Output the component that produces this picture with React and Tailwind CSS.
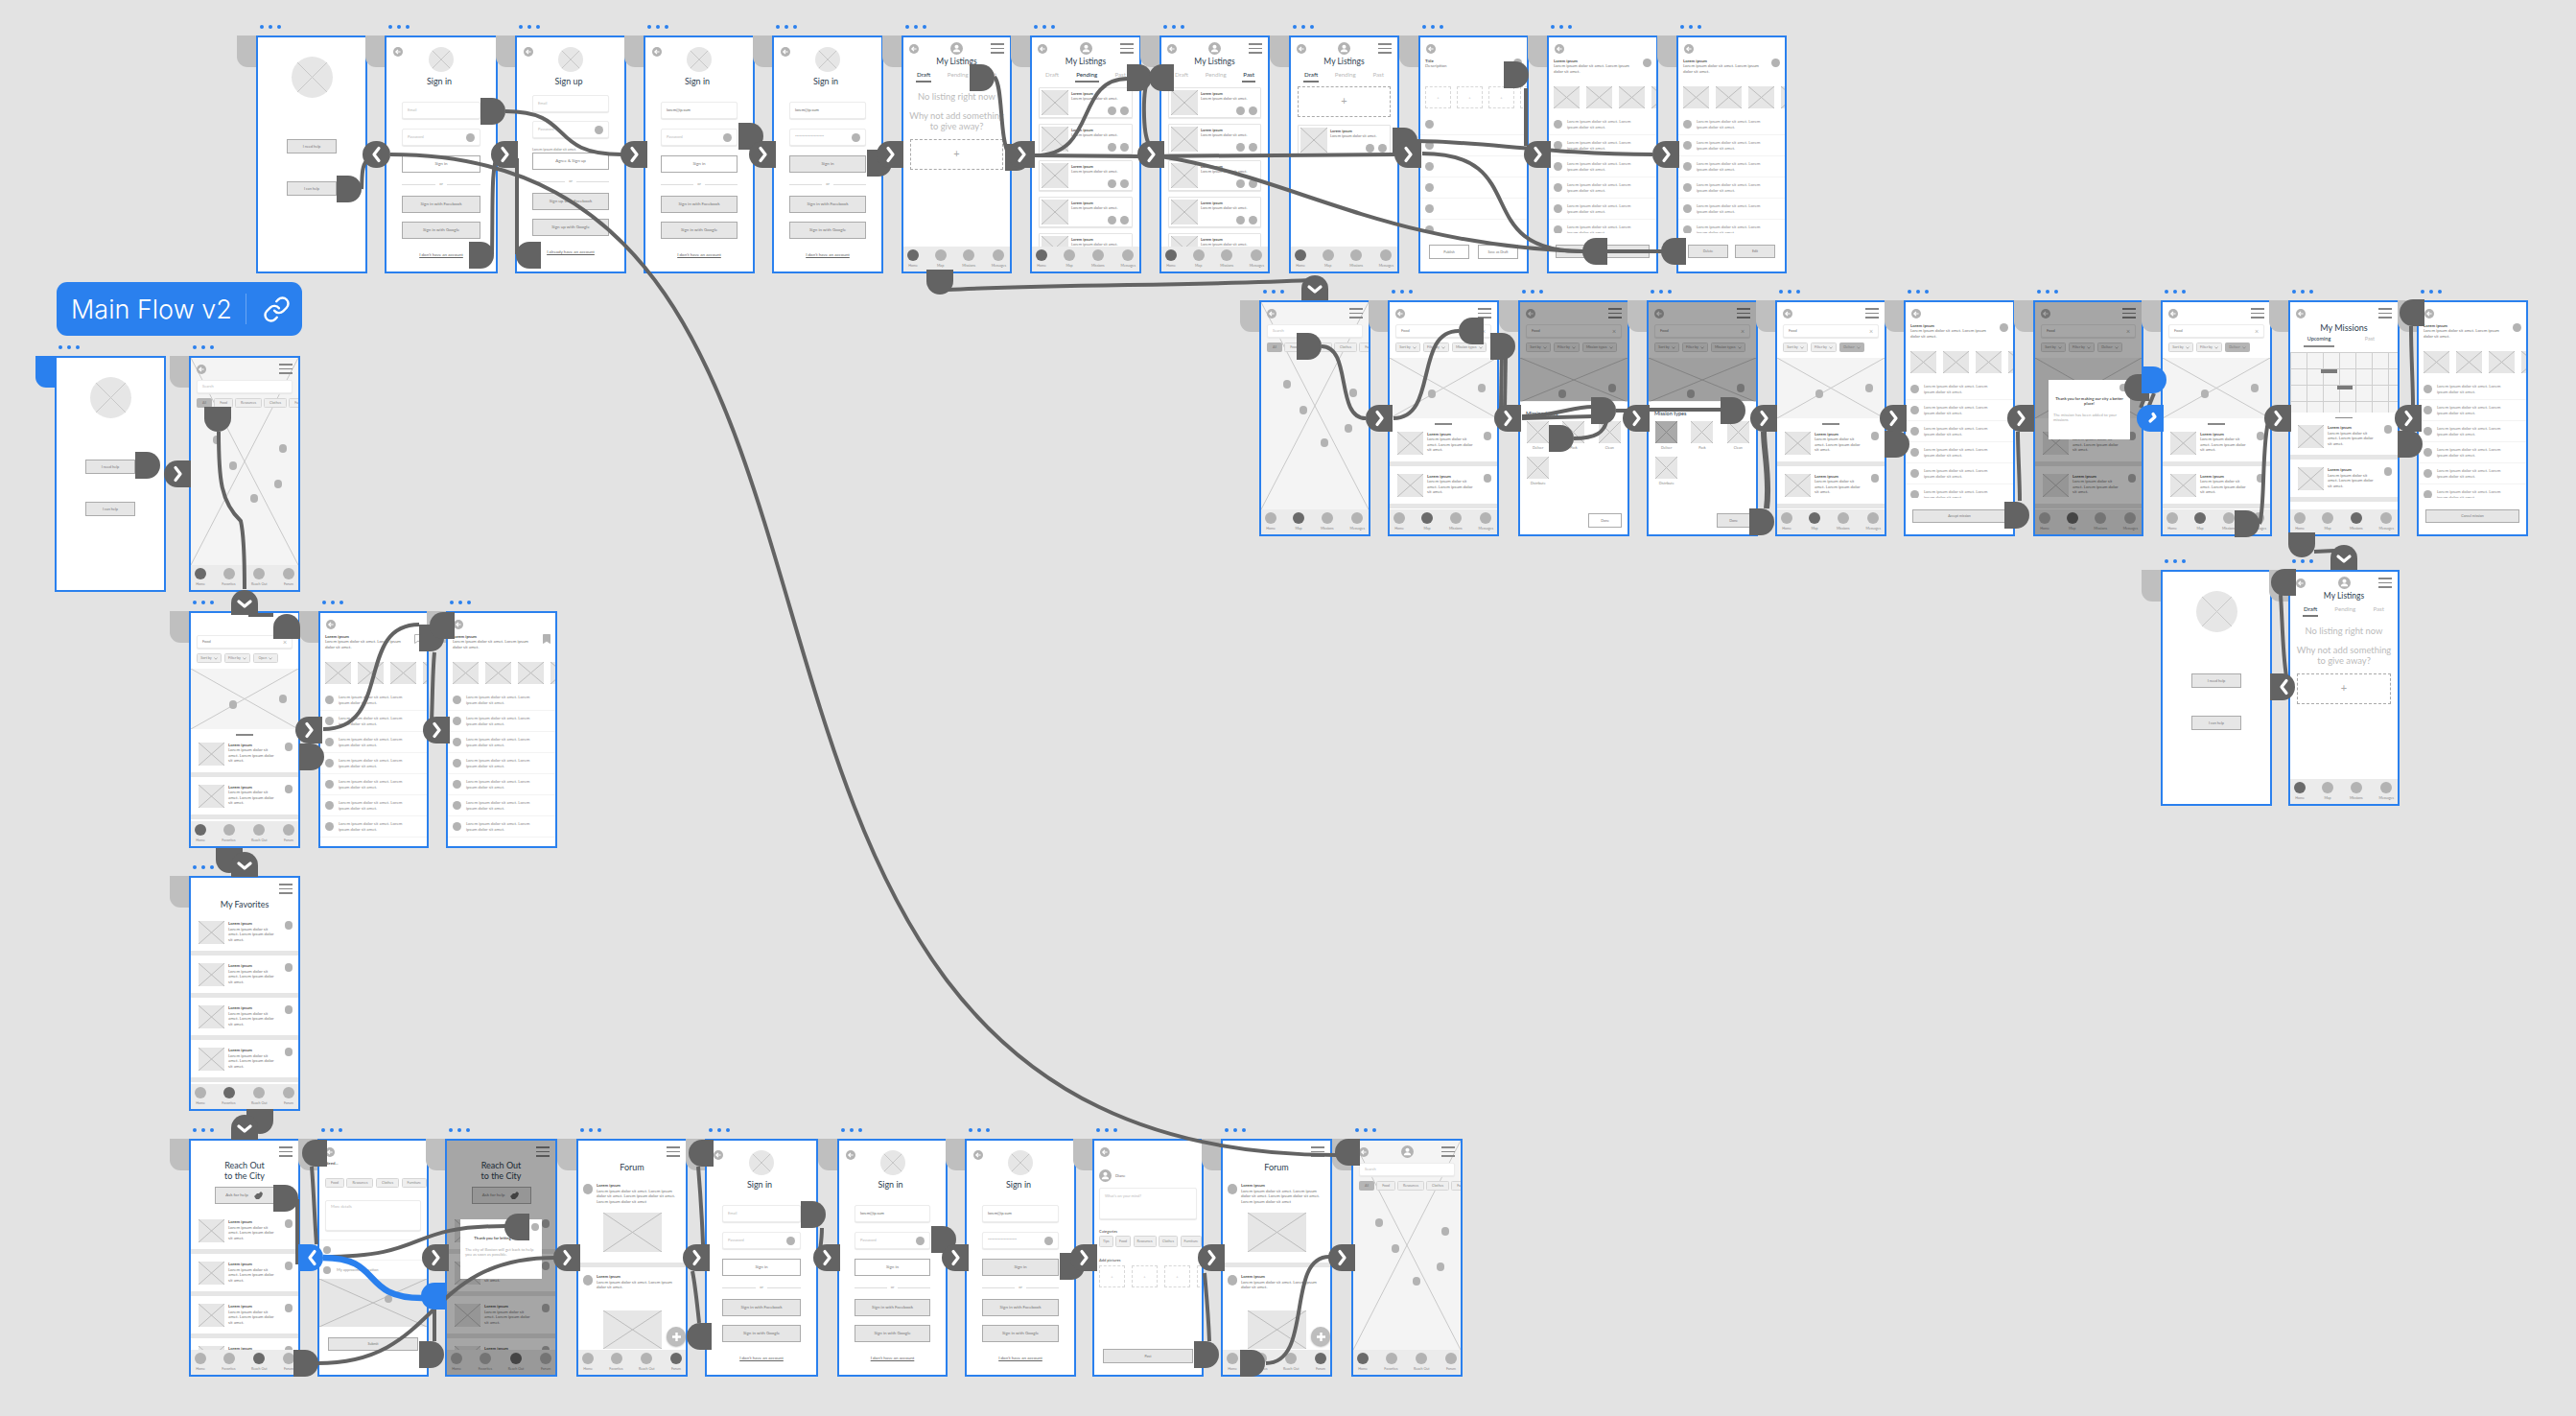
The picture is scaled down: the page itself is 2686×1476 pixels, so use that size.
import React from 'react';
import { Link } from 'lucide-react';

const LOREM2 = 'Lorem ipsum dolor sit amet. Lorem ipsum dolor sit amet.';
const NAV_A = ['Home', 'Map', 'Missions', 'Messages'];
const NAV_B = ['Home', 'Favorites', 'Reach Out', 'Forum'];

const X = ({ className = '', fill = 'bg-[#e6e6e6]', line = '#bcbcbc' }) => (
  <div className={`shrink-0 ${fill} ${className}`}>
    <svg className="block w-full h-full" viewBox="0 0 100 100" preserveAspectRatio="none">
      <path d="M0 0L100 100M100 0L0 100" stroke={line} strokeWidth="1" vectorEffect="non-scaling-stroke" fill="none" />
    </svg>
  </div>
);
const Dot = ({ className = 'w-[8px] h-[8px]', c = 'bg-[#b3b3b3]' }) => <div className={`shrink-0 rounded-full ${c} ${className}`} />;
const Back = () => (
  <svg className="w-[10px] h-[10px] shrink-0 block" viewBox="0 0 10 10">
    <circle cx="5" cy="5" r="5" fill="#b3b3b3" />
    <path d="M7.6 5H3M5 2.8 2.8 5 5 7.2" stroke="#fff" strokeWidth="1.2" fill="none" />
  </svg>
);
const Avatar = ({ className = 'w-[13px] h-[13px]' }) => (
  <svg className={`shrink-0 block ${className}`} viewBox="0 0 14 14">
    <circle cx="7" cy="7" r="7" fill="#b3b3b3" />
    <circle cx="7" cy="5.2" r="2.2" fill="#fff" />
    <path d="M3 11c0-2.4 1.8-3.3 4-3.3s4 .9 4 3.3z" fill="#fff" />
  </svg>
);
const Menu = () => (
  <div className="flex flex-col gap-[2.5px] w-[14px] justify-self-end">
    <div className="h-[1.7px] bg-[#888]" />
    <div className="h-[1.7px] bg-[#888]" />
    <div className="h-[1.7px] bg-[#888]" />
  </div>
);
const Top = ({ back = true, avatar, menu = true }) => (
  <div className="grid grid-cols-[1fr_auto_1fr] items-center h-[13px] mt-[5px] px-[6px] shrink-0">
    {back ? <Back /> : <span />}
    {avatar ? <Avatar /> : <span />}
    {menu ? <Menu /> : <span />}
  </div>
);
const Title = ({ children, className = '' }) => <div className={`text-center text-[#2d3e50] text-[9px] leading-[11px] ${className}`}>{children}</div>;
const Btn = ({ children, className = '', light }) => (
  <div className={`flex items-center justify-center border border-[#ababab] text-[#777] text-[4.5px] ${light ? 'bg-white' : 'bg-[#e6e6e6]'} ${className}`}>{children}</div>
);
const Field = ({ children, dot, x, className = 'h-[18px]' }) => (
  <div className={`flex items-center justify-between bg-white border border-[#ececec] rounded-[2px] shadow-[0_1px_1px_#e8e8e8] px-[5px] text-[4px] text-[#bbb] ${className}`}>
    <span>{children}</span>
    {dot && <Dot className="w-[9px] h-[9px]" />}
    {x && <span className="text-[#666] text-[7px] font-light leading-none">×</span>}
  </div>
);
const Nav = ({ labels = NAV_A, active = 0 }) => (
  <div className="mt-auto shrink-0 h-[26px] bg-[#ebebeb] flex justify-between px-[4px] pt-[3px]">
    {labels.map((l, i) => (
      <div key={l} className="flex flex-col items-center">
        <Dot className="w-[12px] h-[12px]" c={i === active ? 'bg-[#6a6a6a]' : 'bg-[#b3b3b3]'} />
        <span className="text-[3.6px] text-[#8a8a8a] mt-[2px] leading-[5px]">{l}</span>
      </div>
    ))}
  </div>
);
const Chev = () => (
  <svg className="w-[4px] h-[3px] ml-[2px]" viewBox="0 0 8 6"><path d="M1 1l3 3.5L7 1" stroke="#777" strokeWidth="1" fill="none" /></svg>
);
const Chip = ({ children, sel, caret, className = '' }) => (
  <div className={`flex items-center justify-center shrink-0 px-[5px] h-[10px] rounded-[1.5px] border text-[3.6px] ${sel ? 'bg-[#b5b5b5] border-[#b5b5b5] text-[#777]' : 'bg-[#efefef] border-[#d6d6d6] text-[#888]'} ${className}`}>
    {children}{caret && <Chev />}
  </div>
);
const Dashed = ({ className = '' }) => (
  <div className={`flex items-center justify-center shrink-0 border border-dashed border-[#d8d8d8] text-[#bbb] text-[4px] ${className}`}>+</div>
);
const Dim = ({ className = 'inset-0' }) => <div className={`absolute bg-black/35 ${className}`} />;

/* ---------- screens ---------- */
const Help = () => (
  <div className="flex flex-col items-center h-full">
    <X className="w-[43px] h-[43px] rounded-full overflow-hidden mt-[20px]" line="#c8c8c8" />
    <Btn className="w-[52px] h-[15px] mt-[43px] !text-[3.8px]">I need help</Btn>
    <Btn className="w-[52px] h-[15px] mt-[29px] !text-[3.8px]">I can help</Btn>
  </div>
);
const OrLine = () => (
  <div className="flex items-center gap-[4px] mt-[9px] h-[6px] text-[4px] text-[#999]">
    <div className="flex-1 h-[1px] bg-[#ddd]" /><span>or</span><div className="flex-1 h-[1px] bg-[#ddd]" />
  </div>
);
const Logo = () => (
  <div className="grid grid-cols-[1fr_26px_1fr] mt-[10px] px-[7px] h-[26px]">
    <Back />
    <X className="w-[26px] h-[26px] rounded-full overflow-hidden" line="#c8c8c8" />
  </div>
);
const SignIn = ({ email, pass, filled }) => (
  <div className="flex flex-col">
    <Logo />
    <Title className="mt-[4px] pr-[4px]">Sign in</Title>
    <div className="px-[16px] flex flex-col">
      <Field className="h-[18px] mt-[16px]">{email ? <span className="text-[#666]">lorem@ip.sum</span> : 'Email'}</Field>
      <Field dot className="h-[18px] mt-[10px]">{pass ? <span className="text-[#666] tracking-[-0.2px]">********************</span> : 'Password'}</Field>
      <Btn light={!filled} className="h-[18px] mt-[10px]">Sign in</Btn>
      <OrLine />
      <Btn className="h-[18px] mt-[9px]">Sign in with Facebook</Btn>
      <Btn className="h-[18px] mt-[9px]">Sign in with Google</Btn>
      <div className="mt-[14px] text-center underline text-[#666] text-[4.5px] leading-[6px]">I don't have an account</div>
    </div>
  </div>
);
const SignUp = () => (
  <div className="flex flex-col">
    <Logo />
    <Title className="mt-[4px] pr-[4px]">Sign up</Title>
    <div className="px-[16px] flex flex-col">
      <Field className="h-[18px] mt-[9px]">Email</Field>
      <Field dot className="h-[18px] mt-[9px]">Password</Field>
      <div className="text-[3.8px] text-[#888] mt-[9px] leading-[5px]">Lorem ipsum dolor sit amet.</div>
      <Btn light className="h-[18px] mt-[1px]">Agree &amp; Sign up</Btn>
      <OrLine />
      <Btn className="h-[18px] mt-[9px]">Sign up with Facebook</Btn>
      <Btn className="h-[18px] mt-[9px]">Sign up with Google</Btn>
      <div className="mt-[14px] text-center underline text-[#666] text-[4.5px] leading-[6px]">I already have an account</div>
    </div>
  </div>
);
const ListTabs = ({ tab }) => (
  <div className="flex justify-between px-[14px] mt-[4px]">
    {['Draft', 'Pending', 'Past'].map((t) => (
      <div key={t} className="flex flex-col items-center">
        <span className={`text-[6.2px] leading-[7px] ${t === tab ? 'text-[#2d3e50] font-medium' : 'text-[#bbb]'}`}>{t}</span>
        <div className={`h-[1.5px] w-[115%] mt-[3px] ${t === tab ? 'bg-[#777]' : 'bg-transparent'}`} />
      </div>
    ))}
  </div>
);
const LCard = () => (
  <div className="flex gap-[2px] h-[32px] shrink-0 mx-[7px] mb-[6px] p-[2px] bg-white border border-[#e4e4e4] rounded-[1px] shadow-[0_1px_1px_#e6e6e6]">
    <X className="w-[28px] h-[26px]" />
    <div className="flex-1 flex flex-col pt-[1px] ml-[1px]">
      <div className="text-[4px] leading-[5px] font-bold text-[#555]">Lorem ipsum</div>
      <div className="text-[4px] leading-[5px] text-[#777] whitespace-nowrap">Lorem ipsum dolor sit amet.</div>
      <div className="flex justify-end gap-[4px] mt-auto pr-[1px]"><Dot className="w-[9px] h-[9px]" /><Dot className="w-[9px] h-[9px]" /></div>
    </div>
  </div>
);
const Listings = ({ tab, children }) => (
  <div className="flex flex-col h-full">
    <Top avatar />
    <Title className="mt-[2px] !text-[8.5px]">My Listings</Title>
    <ListTabs tab={tab} />
    {children}
  </div>
);
const ListDraft = () => (
  <Listings tab="Draft">
    <div className="text-center text-[#bbb] text-[9.4px] leading-[11px] mt-[9px] whitespace-nowrap">No listing right now</div>
    <div className="text-center text-[#bbb] text-[9.4px] leading-[11px] mt-[9px] whitespace-nowrap">Why not add something<br />to give away?</div>
    <div className="mx-[7px] mt-[8px] h-[32px] border border-dashed border-[#aaa] flex items-center justify-center text-[#aaa] text-[11px]">+</div>
    <Nav />
  </Listings>
);
const ListCards = ({ tab }) => (
  <Listings tab={tab}>
    <div className="flex-1 flex flex-col overflow-hidden mt-[5px]">
      {[0, 1, 2, 3, 4].map((i) => <LCard key={i} />)}
    </div>
    <Nav />
  </Listings>
);
const ListDraft2 = () => (
  <Listings tab="Draft">
    <div className="mx-[7px] mt-[4px] h-[32px] shrink-0 border border-dashed border-[#aaa] flex items-center justify-center text-[#aaa] text-[11px]">+</div>
    <div className="mt-[8px]"><LCard /></div>
    <Nav />
  </Listings>
);
const Head = ({ title = 'Lorem ipsum', desc = 'Lorem ipsum dolor sit amet. Lorem ipsum dolor sit amet.', right }) => (
  <div className="flex justify-between h-[29px] mt-[4px] px-[5px] shrink-0">
    <div className="w-[80px]">
      <div className="text-[4.4px] leading-[5px] font-bold text-[#555]">{title}</div>
      <div className="text-[4.4px] leading-[6px] text-[#777]">{desc}</div>
    </div>
    {right || <Dot className="w-[9px] h-[9px]" />}
  </div>
);
const Row = ({ text = true }) => (
  <div className="flex items-center gap-[5px] h-[22px] px-[5px] border-b border-[#f3f3f3] shrink-0">
    <Dot className="w-[9px] h-[9px]" />
    {text && <div className="w-[78px] text-[4.4px] leading-[5.5px] text-[#888]">{LOREM2}</div>}
  </div>
);
const Rows = ({ text, className = 'h-[124px]' }) => (
  <div className={`flex flex-col overflow-hidden mt-[6px] ${className}`}>
    {[0, 1, 2, 3, 4, 5, 6].map((i) => <Row key={i} text={text} />)}
  </div>
);
const Images = () => (
  <div className="flex gap-[7px] pl-[5px] h-[23px] overflow-hidden shrink-0">
    {[0, 1, 2, 3].map((i) => <X key={i} className="w-[27px] h-[23px]" />)}
  </div>
);
const Create = () => (
  <div className="flex flex-col h-full">
    <Top menu={false} />
    <Head title="Title" desc="Description" />
    <div className="flex gap-[6px] pl-[5px] h-[23px] overflow-hidden shrink-0">
      {[0, 1, 2, 3].map((i) => <Dashed key={i} className="w-[27px] h-[23px]" />)}
    </div>
    <Rows text={false} />
    <div className="flex justify-between px-[9px] mt-[12px]">
      <Btn light className="w-[42px] h-[15px] !text-[3.6px]">Publish</Btn>
      <Btn light className="w-[42px] h-[15px] !text-[3.6px]">Save as Draft</Btn>
    </div>
  </div>
);
const Detail = ({ footer, right, bare }) => (
  <div className="flex flex-col h-full">
    <Top menu={false} />
    <Head right={right} />
    <Images />
    <Rows className={bare ? 'h-[160px]' : 'h-[124px]'} />
    {footer && <div className="mt-[12px] px-[7px]">{footer}</div>}
  </div>
);
const Bookmark = ({ filled }) => (
  <svg className="w-[8px] h-[10px] shrink-0" viewBox="0 0 8 10"><path d="M.5.5h7v9L4 7 .5 9.5z" fill={filled ? '#b3b3b3' : 'none'} stroke="#b3b3b3" strokeWidth="1" /></svg>
);
const Pins = ({ list }) => list.map((p, i) => <div key={i} className={`absolute w-[8px] h-[9px] rounded-full bg-[#b3b3b3] ${p}`} />);
const MapHome = ({ nav, active = 0, avatar }) => (
  <div className="relative flex flex-col h-full">
    <X className="absolute inset-x-0 top-0 bottom-[26px]" fill="bg-[#f4f4f4]" line="#c8c8c8" />
    <div className="relative flex flex-col h-full">
      <Top avatar={avatar} />
      <Field className="h-[14px] mx-[6px] mt-[5px]">Search</Field>
      <div className="flex gap-[2px] pl-[6px] mt-[5px] overflow-hidden">
        <Chip sel>All</Chip><Chip>Food</Chip><Chip>Resources</Chip><Chip>Clothes</Chip><Chip>Furniture</Chip>
      </div>
      <Pins list={['left-[23px] top-[81px]', 'left-[92px] top-[90px]', 'left-[40px] top-[108px]', 'left-[87px] top-[127px]', 'left-[62px] top-[142px]']} />
      <Nav labels={nav} active={active} />
    </div>
  </div>
);
const Search = ({ chips, sel, back = true }) => (
  <>
    <Top back={back} menu={back} />
    <Field x className="h-[14px] mx-[6px] mt-[5px] shrink-0"><span className="text-[#777]">Food</span></Field>
    <div className="flex gap-[3px] pl-[6px] mt-[5px] shrink-0">
      {chips.map((c) => <Chip key={c} caret sel={c === sel} className="min-w-[26px] !px-[3px]">{c}</Chip>)}
    </div>
  </>
);
const MapBox = ({ className = 'h-[63px]' }) => (
  <div className={`relative mt-[6px] shrink-0 ${className}`}>
    <X className="h-full w-full" fill="bg-[#f4f4f4]" line="#c8c8c8" />
    <div className="absolute left-[40px] top-[33px] w-[8px] h-[9px] rounded-full bg-[#b3b3b3]" />
    <div className="absolute left-[92px] top-[27px] w-[8px] h-[9px] rounded-full bg-[#b3b3b3]" />
  </div>
);
const Item = ({ sep = true }) => (
  <div className="shrink-0">
    <div className="flex gap-[3px] h-[38px] pt-[7px] pr-[6px] pl-[8px]">
      <X className="w-[27px] h-[24px]" />
      <div className="w-[49px] ml-[1px]">
        <div className="text-[4.4px] leading-[5.5px] font-bold text-[#555]">Lorem ipsum</div>
        <div className="text-[4.4px] leading-[5.5px] text-[#777]">Lorem ipsum dolor sit amet. Lorem ipsum dolor sit amet.</div>
      </div>
      <Dot className="w-[8px] h-[9px] ml-auto" />
    </div>
    {sep && <div className="h-[5px] bg-[#e6e6e6] mb-[1px]" />}
  </div>
);
const MapList = ({ chips = ['Sort by', 'Filter by', 'Mission types'], sel, nav, active = 1, back = true, children }) => (
  <div className="relative flex flex-col h-full">
    <Search chips={chips} sel={sel} back={back} />
    <MapBox />
    <div className="w-[18px] h-[1.5px] bg-[#888] mx-auto mt-[5px] shrink-0" />
    <div className="flex-1 overflow-hidden">
      <Item /><Item /><Item />
    </div>
    <Nav labels={nav} active={active} />
    {children}
  </div>
);
const Mission = ({ selected, darkDone }) => (
  <div className="relative flex flex-col h-full">
    <Search chips={['Sort by', 'Filter by', 'Mission types']} />
    <MapBox className="h-[46px]" />
    <Dim className="inset-x-0 top-0 h-[103px]" />
    <div className="text-[5.5px] leading-[7px] font-medium text-[#2d3e50] pl-[6px] mt-[9px]">Mission types</div>
    <div className="grid grid-cols-3 gap-x-[14px] px-[7px] mt-[4px] text-center text-[3.6px] text-[#888]">
      {['Deliver', 'Pack', 'Clean', 'Distribute'].map((t, i) => (
        <div key={t} className="flex flex-col items-center h-[37px]">
          <X className="w-[23px] h-[23px]" fill={selected && i === 0 ? 'bg-[#aaa]' : 'bg-[#e6e6e6]'} line={selected && i === 0 ? '#888' : '#bcbcbc'} />
          <span className="mt-[2px]">{t}</span>
        </div>
      ))}
    </div>
    <div className="flex-1" />
    <Btn light={!darkDone} className="w-[35px] h-[15px] self-end mr-[6px] mb-[7px] !text-[3.6px]">Done</Btn>
  </div>
);
const Modal = ({ title, body, className = '' }) => (
  <div className={`absolute w-[85px] h-[62px] bg-white px-[5px] pt-[17px] ${className}`}>
    <Dot className="absolute right-[3px] top-[4px] w-[8px] h-[8px]" />
    <div className="text-[4.2px] leading-[5px] font-bold text-[#555] text-center">{title}</div>
    <div className="text-[4.2px] leading-[5px] text-[#aaa] mt-[7px]">{body}</div>
  </div>
);
const Missions = () => (
  <div className="flex flex-col h-full">
    <Top />
    <Title className="mt-[3px]">My Missions</Title>
    <div className="flex justify-between px-[14px] mt-[3px]">
      <div className="flex flex-col items-center"><span className="text-[5.5px] leading-[7px] text-[#2d3e50] font-medium">Upcoming</span><div className="h-[1.5px] w-[32px] bg-[#888] mt-[3px]" /></div>
      <span className="text-[5.5px] leading-[7px] text-[#bbb] mr-[10px]">Past</span>
    </div>
    <div className="relative h-[63px] mt-[5px] bg-[#f4f4f4] shrink-0 overflow-hidden bg-[linear-gradient(#cfcfcf_1px,transparent_1px),linear-gradient(90deg,#cfcfcf_1px,transparent_1px)] bg-[length:17px_17px]">
      <div className="absolute left-[32px] top-[18px] w-[17px] h-[4px] bg-[#7a7a7a]" />
      <div className="absolute left-[49px] top-[35px] w-[16px] h-[4px] bg-[#7a7a7a]" />
    </div>
    <div className="w-[18px] h-[1.5px] bg-[#888] mx-auto mt-[5px] shrink-0" />
    <div className="flex-1 overflow-hidden"><Item /><Item /></div>
    <Nav active={2} />
  </div>
);
const Favorites = () => (
  <div className="flex flex-col h-full">
    <Top back={false} />
    <Title className="mt-[4px]">My Favorites</Title>
    <div className="flex-1 overflow-hidden mt-[5px]"><Item /><Item /><Item /><Item /><Item /></div>
    <Nav labels={NAV_B} active={1} />
  </div>
);
const ReachOut = ({ children }) => (
  <div className="relative flex flex-col h-full">
    <Top back={false} />
    <Title className="mt-[2px]">Reach Out<br />to the City</Title>
    <div className="self-center flex items-center justify-center gap-[5px] w-[62px] h-[18px] mt-[6px] border border-[#ababab] bg-[#e6e6e6] text-[#777] text-[4.5px] shrink-0">
      Ask for help
      <svg className="w-[11px] h-[9px]" viewBox="0 0 11 9"><path d="M1 5l3-3 2 0 2-2 2 2-1 3-3 3-3 0z" fill="#666" /></svg>
    </div>
    <div className="flex-1 overflow-hidden mt-[9px]"><Item /><Item /><Item /><Item /></div>
    <Nav labels={NAV_B} active={2} />
    {children}
  </div>
);
const Ask = () => (
  <div className="flex flex-col h-full">
    <Top menu={false} />
    <div className="text-[4.4px] font-bold text-[#666] pl-[6px] mt-[3px] leading-[6px]">Need...</div>
    <div className="flex gap-[2.5px] pl-[6px] mt-[12px] overflow-hidden">
      <Chip>Food</Chip><Chip>Resources</Chip><Chip>Clothes</Chip><Chip>Furniture</Chip><Chip>Tips</Chip>
    </div>
    <Field className="!items-start !pt-[3px] h-[32px] mx-[6px] mt-[13px] shrink-0">More details</Field>
    <div className="h-[22px] mt-[9px] px-[4px] flex items-center border-y border-[#f3f3f3]"><Dot className="w-[8px] h-[8px]" /></div>
    <div className="h-[19px] px-[4px] flex items-center gap-[6px] text-[4px] text-[#999]"><Dot className="w-[8px] h-[8px]" />My approximate location</div>
    <div className="relative h-[50px]">
      <X className="w-full h-full" />
      <div className="absolute left-[68px] top-[17px] w-[8px] h-[8px] rounded-full bg-[#b3b3b3]" />
    </div>
    <Btn className="h-[14px] mx-[9px] mt-[11px] !text-[3.6px]">Submit</Btn>
  </div>
);
const Post = ({ short }) => (
  <div className="flex flex-col shrink-0">
    <div className="flex gap-[4px] pl-[5px] pr-[5px]">
      <Dot className="w-[10px] h-[11px] mt-[1px]" />
      <div className="text-[4.4px] leading-[5.5px] text-[#777]">
        <div className="font-bold text-[#555]">Lorem ipsum</div>
        {short ? LOREM2 : `${LOREM2} ${LOREM2} ${LOREM2}`.slice(0, 110)}
      </div>
    </div>
  </div>
);
const Forum = () => (
  <div className="relative flex flex-col h-full">
    <Top back={false} />
    <Title className="mt-[4px]">Forum</Title>
    <div className="flex-1 overflow-hidden mt-[11px]">
      <Post />
      <div className="flex justify-center mt-[9px]"><X className="w-[61px] h-[41px]" /></div>
      <div className="h-[5px] bg-[#e6e6e6] mt-[11px] mb-[7px]" />
      <Post short />
      <div className="flex justify-center mt-[21px]"><X className="w-[61px] h-[40px]" /></div>
    </div>
    <Nav labels={NAV_B} active={3} />
    <div className="absolute left-[92px] top-[194px] w-[20px] h-[20px] rounded-full bg-[#bdbdbd] shadow-[0_1px_2px_#aaa] flex items-center justify-center">
      <svg className="w-[11px] h-[11px]" viewBox="0 0 11 11"><path d="M5.5 1v9M1 5.5h9" stroke="#fff" strokeWidth="2.4" /></svg>
    </div>
  </div>
);
const PostForm = () => (
  <div className="flex flex-col h-full">
    <Top menu={false} />
    <div className="flex items-center gap-[4px] pl-[5px] mt-[12px]"><Avatar /><span className="text-[4px] text-[#777] font-medium">Diane</span></div>
    <Field className="!items-start !pt-[5px] h-[33px] mx-[5px] mt-[6px] shrink-0">What's on your mind?</Field>
    <div className="text-[4px] font-bold text-[#777] pl-[5px] mt-[10px] leading-[5px]">Categories</div>
    <div className="flex gap-[2.5px] pl-[5px] mt-[2px] overflow-hidden">
      <Chip className="!h-[12px] !px-[3px]">Tips</Chip><Chip className="!h-[12px] !px-[3px]">Food</Chip><Chip className="!h-[12px] !px-[3px]">Resources</Chip><Chip className="!h-[12px] !px-[3px]">Clothes</Chip><Chip className="!h-[12px] !px-[3px]">Furniture</Chip>
    </div>
    <div className="text-[4px] font-bold text-[#777] pl-[5px] mt-[11px] leading-[5px]">Add pictures</div>
    <div className="flex gap-[7px] pl-[5px] mt-[3px] overflow-hidden">
      {[0, 1, 2, 3].map((i) => <Dashed key={i} className="w-[27px] h-[23px]" />)}
    </div>
    <Btn className="h-[15px] mx-[9px] mt-auto mb-[12px] !text-[3.6px]">Post</Btn>
  </div>
);

/* ---------- canvas data ---------- */
const FRAMES = [
  [267, 37, 116, 248, <Help />], [401, 37, 118, 248, <SignIn />], [537, 37, 116, 248, <SignUp />], [671, 37, 116, 248, <SignIn email />], [805, 37, 116, 248, <SignIn email pass filled />],
  [940, 37, 115, 248, <ListDraft />], [1074, 37, 116, 248, <ListCards tab="Pending" />], [1209, 37, 115, 248, <ListCards tab="Past" />], [1344, 37, 115, 248, <ListDraft2 />],
  [1479, 37, 115, 248, <Create />],
  [1613, 37, 116, 248, <Detail footer={<Btn className="h-[14px] !text-[3.6px]">Accept mission</Btn>} />],
  [1748, 37, 115, 248, <Detail footer={<div className="flex justify-between px-[3px]"><Btn className="w-[42px] h-[14px] !text-[3.6px]">Delete</Btn><Btn className="w-[42px] h-[14px] !text-[3.6px]">Edit</Btn></div>} />],

  [1313, 313, 116, 246, <MapHome active={1} />],
  [1447, 313, 116, 246, <MapList />],
  [1583, 313, 116, 246, <Mission />],
  [1717, 313, 116, 246, <Mission selected darkDone />],
  [1851, 313, 116, 246, <MapList sel="Deliver" chips={['Sort by', 'Filter by', 'Deliver']} />],
  [1985, 313, 116, 246, <Detail footer={<Btn className="h-[14px] !text-[3.6px]">Accept mission</Btn>} />],
  [2120, 313, 115, 246, <MapList sel="none" chips={['Sort by', 'Filter by', 'Deliver']}><Dim /><Modal className="left-[14px] top-[81px]" title="Thank you for making our city a better place!" body="The mission has been added to your missions" /></MapList>],
  [2253, 313, 116, 246, <MapList sel="Deliver" chips={['Sort by', 'Filter by', 'Deliver']} />],
  [2386, 313, 116, 246, <Missions />],
  [2520, 313, 116, 246, <Detail footer={<Btn className="h-[14px] !text-[3.6px]">Cancel mission</Btn>} />],
  [2253, 594, 116, 246, <Help />],
  [2386, 594, 116, 246, <ListDraft />],

  [57, 371, 116, 246, <Help />, true],
  [197, 371, 116, 246, <MapHome nav={NAV_B} />],
  [197, 637, 116, 247, <MapList back={false} chips={['Sort by', 'Filter by', 'Open']} nav={NAV_B} active={0} />],
  [332, 637, 115, 247, <Detail bare right={<Bookmark />} />],
  [465, 637, 116, 247, <Detail bare right={<Bookmark filled />} />],
  [197, 913, 116, 245, <Favorites />],

  [197, 1187, 116, 248, <ReachOut />],
  [331, 1187, 116, 248, <Ask />],
  [464, 1187, 117, 248, <ReachOut><Dim /><Modal className="left-[14px] top-[82px]" title="Thank you for letting us know!" body="The city of Boston will get back to help you as soon as possible." /></ReachOut>],
  [601, 1187, 116, 248, <Forum />],
  [735, 1187, 118, 248, <SignIn />],
  [873, 1187, 115, 248, <SignIn email />],
  [1006, 1187, 116, 248, <SignIn email pass filled />],
  [1139, 1187, 116, 248, <PostForm />],
  [1273, 1187, 116, 248, <Forum />],
  [1409, 1187, 116, 248, <MapHome nav={NAV_B} avatar />],
];

const LINES = [
  'M377 197C378 182 376 172 386 163',
  'M407 161C1000 161 635 1204 1393 1204',
  'M527 116C600 116 570 161 648 161',
  'M513 265C514 210 512 175 519 161',
  'M539 265L539 165',
  'M1037 80C1046 90 1042 145 1052 161',
  'M1079 162L1186 163L1455 161',
  'M1176 82C1120 82 1145 162 1079 162',
  'M1199 81C1190 90 1192 140 1198 150',
  'M1210 163C1350 185 1440 255 1650 262',
  'M1483 160C1600 160 1530 262 1650 262',
  'M1650 262L1733 262',
  'M1477 147C1540 147 1620 161 1723 161',
  'M1591 92L1591 152',
  'M987 302C1100 296 1250 298 1366 292',
  'M1378 361C1410 361 1392 436 1424 436',
  'M1453 436C1500 436 1474 345 1521 345',
  'M1570 370L1569 425',
  'M1566 370L1565 425',
  'M1587 434C1620 434 1640 424 1660 424',
  'M1587 436L1660 434',
  'M1641 457C1665 457 1672 450 1675 440',
  'M1685 428L1700 428',
  'M1794 427L1720 427',
  'M1841 530C1845 500 1838 470 1838 450',
  'M1843 530C1847 500 1840 470 1840 450',
  'M2106 522C2106 500 2104 470 2104 450',
  'M2246 410L2240 425',
  'M2238 410L2232 425',
  'M2356 546C2362 530 2358 460 2366 436',
  'M2514 340C2514 370 2516 400 2516 422',
  'M2413 575L2434 574',
  'M2378 620C2380 650 2380 680 2384 705',
  'M228 450C228 499 230 523 251 543C255 560 255 590 255 614',
  'M259 641L285 641',
  'M337 760C410 760 370 651 437 651',
  'M453 680C451 700 451 730 450 752',
  'M310 1250L310 1318',
  'M325 1216C327 1240 328 1270 330 1297',
  'M337 1310C450 1310 420 1278 527 1278',
  'M331 1421C460 1421 440 1311 579 1311',
  'M453 1365L453 1398',
  'M728 1216C730 1240 732 1270 733 1297',
  'M722 1325C725 1340 727 1360 729 1379',
  'M857 1280C857 1290 856 1296 855 1303',
  'M1261 1398C1260 1370 1258 1350 1256 1327',
  'M1320 1421C1370 1421 1340 1310 1386 1310',
];

// x, y (top-left), direction of the round side
const PLUGS = [
  [351, 183, 'r'], [501, 102, 'r'], [489, 252, 'r'], [538, 252, 'l'], [770, 128, 'r'], [904, 156, 'r'],
  [1011, 67, 'r'], [1048, 150, 'r'], [1175, 67, 'r'], [1198, 67, 'l'], [1452, 133, 'r'], [1568, 64, 'r'], [1650, 248, 'l'], [1732, 248, 'l'],
  [966, 281, 'b'],
  [1352, 347, 'r'], [1521, 331, 'l'], [1554, 347, 'r'], [1659, 414, 'r'], [1615, 443, 'r'], [1794, 414, 'r'], [1824, 530, 'r'], [1965, 449, 'r'],
  [2090, 523, 'r'], [2215, 390, 'l'], [2330, 532, 'r'], [2502, 312, 'l'], [2500, 449, 'r'], [2386, 555, 'b'], [2368, 593, 'l'],
  [141, 471, 'r'], [213, 424, 'b'], [285, 640, 't'], [312, 775, 'r'], [437, 651, 'r'], [448, 638, 'l'], [225, 884, 'b'], [257, 1156, 'b'],
  [285, 1235, 'r'], [315, 1188, 'l'], [526, 1265, 'l'], [306, 1407, 'r'], [437, 1398, 'r'], [718, 1188, 'l'], [716, 1379, 'l'],
  [835, 1252, 'r'], [971, 1278, 'r'], [1105, 1306, 'r'], [1245, 1398, 'r'], [1293, 1407, 'r'], [1392, 1187, 'l'],
];
const BLUE_PLUGS = [[2233, 382, 'r'], [439, 1337, 'l']];

// left, centre y, kind
const TABS = [
  [378, 161, 'l2'], [512, 161, 'r'], [647, 161, 'r'], [781, 161, 'r'], [914, 161, 'r'], [1051, 161, 'r'], [1186, 161, 'r'], [1454, 161, 'r'], [1589, 161, 'r'], [1723, 161, 'r'],
  [1424, 436, 'r'], [1558, 436, 'r'], [1692, 436, 'r'], [1825, 436, 'r'], [1960, 436, 'r'], [2093, 436, 'r'], [2361, 436, 'r'], [2497, 436, 'r'],
  [171, 494, 'r'], [308, 761, 'r'], [441, 761, 'r'],
  [440, 1311, 'r'], [577, 1311, 'r'], [712, 1311, 'r'], [848, 1311, 'r'], [982, 1311, 'r'], [1116, 1311, 'r'], [1249, 1311, 'r'], [1385, 1311, 'r'],
  [2367, 716, 'l'],
  [1357, 300, 'd'], [2430, 581, 'd'], [241, 628, 'd'], [241, 901, 'd'], [241, 1175, 'd'],
];
const BLUE_TABS = [[2228, 436, 'rs'], [311, 1311, 'l']];

const plugPath = ([x, y, d]) => {
  if (d === 'r') return `M${x} ${y}h12a14 14 0 0 1 0 28h-12z`;
  if (d === 'l') return `M${x + 26} ${y}h-12a14 14 0 0 0 0 28h12z`;
  if (d === 't') return `M${x} ${y + 26}v-12a14 14 0 0 1 28 0v12z`;
  return `M${x} ${y}v12a14 14 0 0 0 28 0v-12z`;
};
const tabPath = ([x, cy, k]) => {
  if (k === 'l') return `M${x} ${cy - 14}h13a13 14 0 0 1 0 28h-13z`;
  if (k === 'l2') return `M${x + 14} ${cy - 14}h1a14 14 0 0 1 0 28h-1a14 14 0 0 1 0-28z`;
  if (k === 'd') return `M${x} ${cy + 13}v-12a14 14 0 0 1 28 0v12z`;
  return `M${x + 28} ${cy - 14}h-14a14 14 0 0 0 0 28h14z`;
};
const chevPath = ([x, cy, k]) => {
  if (k === 'l' || k === 'l2') return `M${x + 17} ${cy - 6.5}l-5 6.5l5 6.5`;
  if (k === 'd') return `M${x + 8} ${cy - 1}l6 5l6-5`;
  if (k === 'rs') return `M${x + 14} ${cy + 3}l5-4.5l-2-3`;
  return `M${x + 12} ${cy - 6.5}l5 6.5l-5 6.5`;
};

const Frame = ({ f }) => {
  const [x, y, w, h, body, start] = f;
  return (
    <div className="absolute" style={{ left: x, top: y, width: w, height: h }}>
      <div className="absolute left-[4px] -top-[11px] flex gap-[5.5px]">
        <span className="w-[3.5px] h-[3.5px] rounded-full bg-[#2a80ee]" />
        <span className="w-[3.5px] h-[3.5px] rounded-full bg-[#2a80ee]" />
        <span className="w-[3.5px] h-[3.5px] rounded-full bg-[#2a80ee]" />
      </div>
      <div className={`absolute -left-[20px] top-0 w-[24px] h-[33px] rounded-bl-[11px] ${start ? 'bg-[#2a80ee]' : 'bg-[#bfbfbf]'}`} />
      <div className="relative w-full h-full bg-white border-2 border-[#2a80ee] overflow-hidden">{body}</div>
    </div>
  );
};

export default function App() {
  return (
    <div className="relative w-[2686px] h-[1476px] bg-[#e3e3e3] overflow-hidden font-['Lato',sans-serif]">
      {FRAMES.map((f, i) => <Frame key={i} f={f} />)}
      <div className="absolute left-[59px] top-[294px] w-[256px] h-[56px] rounded-[11px] bg-[#2a80ee] flex items-center text-white pl-[15px]">
        <span className="font-['Inter',sans-serif] text-[27px] font-light w-[182px] leading-none">Main Flow v2</span>
        <div className="w-[1px] h-[32px] bg-white/30" />
        <Link className="w-[29px] h-[29px] ml-[17px]" strokeWidth={2} />
      </div>
      <svg className="absolute left-0 top-0 pointer-events-none" width="2686" height="1476" viewBox="0 0 2686 1476" fill="none">
        {LINES.map((d, i) => <path key={i} d={d} stroke="#636363" strokeWidth="4" />)}
        <path d="M337 1311C400 1311 375 1353 440 1353" stroke="#2a80ee" strokeWidth="6.5" />
        {PLUGS.map((p, i) => <path key={i} d={plugPath(p)} fill="#636363" />)}
        {BLUE_PLUGS.map((p, i) => <path key={i} d={plugPath(p)} fill="#2a80ee" />)}
        {TABS.map((t, i) => (
          <g key={i}>
            <path d={tabPath(t)} fill="#636363" />
            <path d={chevPath(t)} stroke="#fff" strokeWidth="3.2" strokeLinecap="round" strokeLinejoin="round" />
          </g>
        ))}
        {BLUE_TABS.map((t, i) => (
          <g key={i}>
            <path d={tabPath(t)} fill="#2a80ee" />
            <path d={chevPath(t)} stroke="#fff" strokeWidth="3.2" strokeLinecap="round" strokeLinejoin="round" />
          </g>
        ))}
      </svg>
    </div>
  );
}
